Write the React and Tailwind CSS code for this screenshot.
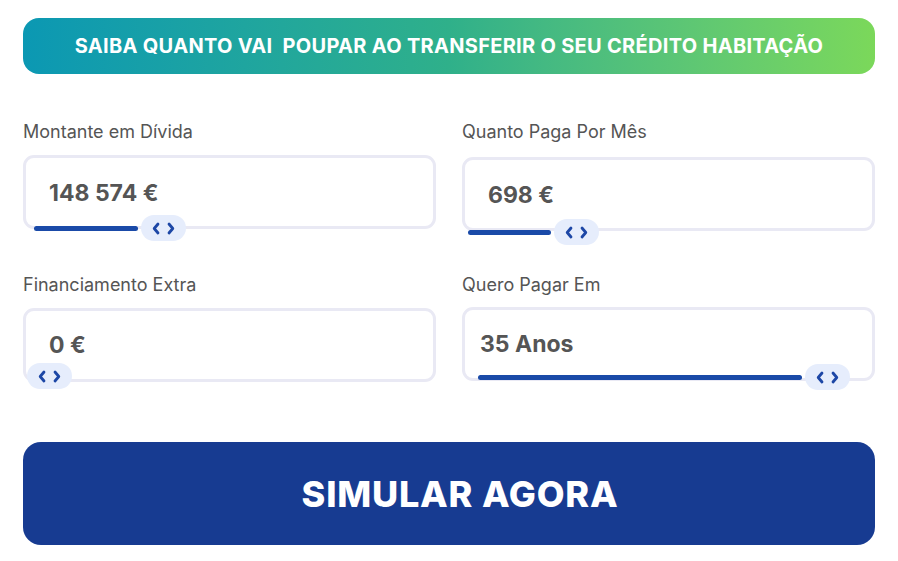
import React from "react";

function Thumb() {
  return (
    <div className="flex h-[26px] w-[45px] items-center justify-center gap-[7px] rounded-full bg-[#e6edfc]">
      <svg width="8" height="13" viewBox="0 0 8 13" fill="none">
        <path d="M6 2L2.2 6.5 6 11" stroke="#1d47a6" strokeWidth="2.8" strokeLinecap="round" strokeLinejoin="round" />
      </svg>
      <svg width="8" height="13" viewBox="0 0 8 13" fill="none">
        <path d="M2 2l3.8 4.5L2 11" stroke="#1d47a6" strokeWidth="2.8" strokeLinecap="round" strokeLinejoin="round" />
      </svg>
    </div>
  );
}

function Field({ label, value, boxClass, sliderClass, fillWidth, valueClass }) {
  return (
    <div className="flex flex-col">
      <div className="text-[18px] leading-[20px] text-[#555]" style={{ fontFamily: "Inter, sans-serif" }}>{label}</div>
      <div className={"relative h-[74px] rounded-[11px] border-[3px] border-[#e9e9f4] " + boxClass}>
        <div className={"font-bold text-[23px] leading-[28px] text-[#555] " + valueClass} style={{ fontFamily: "Inter, sans-serif" }}>{value}</div>
        <div className={"absolute flex items-center gap-[3px] " + sliderClass}>
          {fillWidth > 0 && <div className="h-[5px] rounded-full bg-[#1a4aa8]" style={{ width: fillWidth }} />}
          <Thumb />
        </div>
      </div>
    </div>
  );
}

export default function App() {
  return (
    <div className="w-[898px] h-[561px] bg-white px-[23px] pt-[18px]" style={{ fontFamily: "Inter, sans-serif" }}>
      <div className="flex h-[56px] items-center justify-center rounded-[16px] bg-gradient-to-r from-[#0b98b3] via-[#2fb08a] to-[#7bd85a]">
        <span className="text-[20px] font-bold tracking-[0.3px] text-white">SAIBA QUANTO VAI&nbsp; POUPAR AO TRANSFERIR O SEU CRÉDITO HABITAÇÃO</span>
      </div>
      <div className="mt-[48px] grid grid-cols-2 gap-x-[26px]">
        <Field
          label="Montante em Dívida"
          value="148 574 €"
          boxClass="mt-[13px]"
          valueClass="pl-[23px] pt-[21px]"
          sliderClass="left-[8px] bottom-[-15px]"
          fillWidth={104}
        />
        <Field
          label="Quanto Paga Por Mês"
          value="698 €"
          boxClass="mt-[15px]"
          valueClass="pl-[23px] pt-[21px]"
          sliderClass="left-[3px] bottom-[-17px]"
          fillWidth={83}
        />
      </div>
      <div className="mt-[44px] grid grid-cols-2 gap-x-[26px]">
        <Field
          label="Financiamento Extra"
          value="0 €"
          boxClass="mt-[13px]"
          valueClass="pl-[23px] pt-[20px]"
          sliderClass="left-[1px] bottom-[-10px]"
          fillWidth={0}
        />
        <Field
          label="Quero Pagar Em"
          value="35 Anos"
          boxClass="mt-[12px]"
          valueClass="pl-[15px] pt-[20px]"
          sliderClass="left-[13px] bottom-[-12px]"
          fillWidth={324}
        />
      </div>
      <div className="mt-[60px] flex h-[103px] items-center justify-center rounded-[18px] bg-[#173b91] pl-[22px]">
        <span className="text-[36px] font-extrabold tracking-[0.8px] text-white" style={{ fontFamily: "Inter, sans-serif" }}>SIMULAR AGORA</span>
      </div>
    </div>
  );
}
